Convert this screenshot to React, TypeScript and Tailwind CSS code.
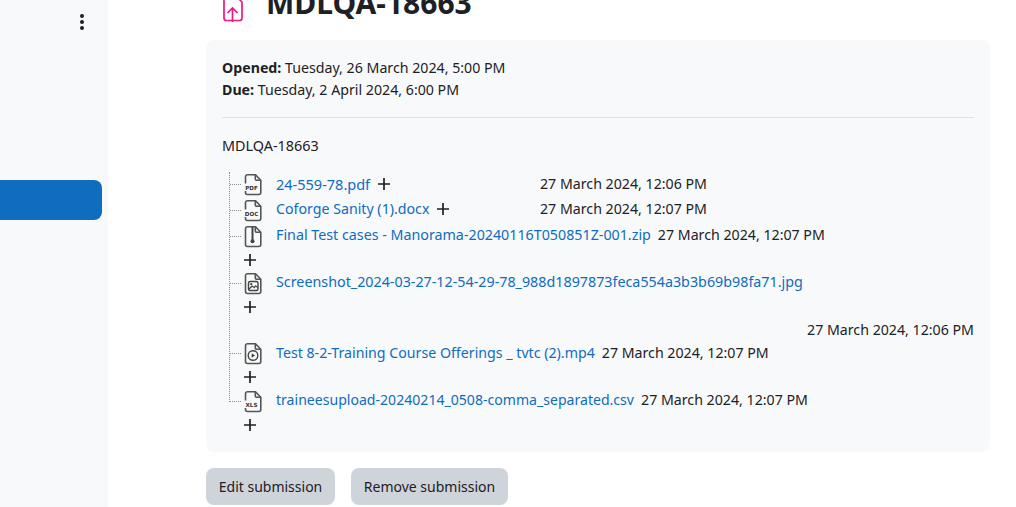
import type { ReactNode } from 'react';

const FONT = "font-['Noto_Sans','Open_Sans',sans-serif]";

// file outline shared by all the type icons
function FileIcon({ children }: { children?: ReactNode }) {
  return (
    <svg width="20" height="24" viewBox="0 0 20 24" fill="none" className="block shrink-0">
      <path
        d="M4.5 2.7h8l5.3 5.6v12.2a2 2 0 0 1-2 2H4.5a2 2 0 0 1-2-2V4.7a2 2 0 0 1 2-2Z"
        fill="#f8f9fa"
        stroke="#555"
        strokeWidth="1.6"
      />
      <path d="M12.3 2.7v4.1a1.5 1.5 0 0 0 1.5 1.5h4" stroke="#555" strokeWidth="1.6" />
      {children}
    </svg>
  );
}

function LabelIcon({ label }: { label: string }) {
  return (
    <FileIcon>
      <rect x="0" y="11.5" width="17" height="7.5" fill="#f8f9fa" />
      <text
        x="8.5"
        y="18"
        textAnchor="middle"
        fontFamily="'DejaVu Sans', sans-serif"
        fontWeight="700"
        fontSize="5.6"
        fill="#333"
      >
        {label}
      </text>
    </FileIcon>
  );
}

function ZipIcon() {
  return (
    <FileIcon>
      <path d="M9.5 3v13" stroke="#444" strokeWidth="2" />
      <circle cx="9.5" cy="17.2" r="2" fill="#444" />
    </FileIcon>
  );
}

function ImageIcon() {
  return (
    <FileIcon>
      <rect x="5.5" y="10.5" width="9.5" height="9" rx="1.5" stroke="#444" strokeWidth="1.4" />
      <circle cx="8.2" cy="13.2" r="1.1" fill="#444" />
      <path d="m6 18 3.2-3 2 1.6 1.5-1.8 2 1.8" stroke="#444" strokeWidth="1.2" />
    </FileIcon>
  );
}

function VideoIcon() {
  return (
    <FileIcon>
      <circle cx="10" cy="14.5" r="4.8" stroke="#444" strokeWidth="1.4" />
      <path d="M8.7 12.3v4.4l3.4-2.2Z" fill="#444" />
    </FileIcon>
  );
}

function Plus() {
  return (
    <svg width="14" height="14" viewBox="0 0 14 14" className="block shrink-0">
      <path d="M7 1v12M1 7h12" stroke="#1d2125" strokeWidth="1.7" />
    </svg>
  );
}

interface FileRowProps {
  icon: ReactNode;
  name: string;
  nameSize: string;
  date: string;
  inlinePlus?: boolean;
  dateOwnLine?: boolean;
  last?: boolean;
  low?: boolean;
  className?: string;
}

function FileRow({ icon, name, nameSize, date, inlinePlus, dateOwnLine, last, low, className }: FileRowProps) {
  const textBox = low ? 'h-[24px] leading-[24px]' : 'h-[22px] leading-[22px]';
  return (
    <li className={`relative pl-[13px] ${className ?? ''}`}>
      {/* rama del árbol */}
      <span className="absolute left-0 top-[12px] w-[11px] border-t border-dotted border-[#8a8d91]" />
      {last && <span className="absolute left-[-1px] top-[13px] bottom-0 w-[1px] bg-[#f8f9fa]" />}
      <div className="flex items-start h-[24px]">
        <div className="w-[33px] shrink-0">{icon}</div>
        <div className={`flex items-center ${textBox} ${inlinePlus ? 'w-[264px]' : ''}`}>
          <a className={`text-[#0f6cbf] whitespace-nowrap ${nameSize}`}>{name}</a>
          {inlinePlus && (
            <span className="ml-[7px]">
              <Plus />
            </span>
          )}
        </div>
        {!dateOwnLine && (
          <span className={`${textBox} whitespace-nowrap ${inlinePlus ? '' : 'ml-[7px]'}`}>{date}</span>
        )}
      </div>
      {!inlinePlus && (
        <div className="pt-[5px]">
          <Plus />
        </div>
      )}
      {dateOwnLine && <div className="text-right leading-[24px] mt-[4px]">{date}</div>}
    </li>
  );
}

export default function App() {
  return (
    <div className={`${FONT} flex h-[507px] w-[1016px] overflow-hidden bg-white text-[14.2px] text-[#1d2125]`}>
      {/* Sidebar */}
      <aside className="w-[108px] shrink-0 bg-[#f8f9fa] pt-[14px]">
        <div className="flex flex-col items-center gap-[2px] w-[4px] ml-[80px]">
          <span className="size-[4px] rounded-full bg-[#1d2125]" />
          <span className="size-[4px] rounded-full bg-[#1d2125]" />
          <span className="size-[4px] rounded-full bg-[#1d2125]" />
        </div>
        <div className="mt-[150px] h-[40px] w-[102px] rounded-r-lg bg-[#0f6cbf]" />
      </aside>

      {/* Contenido */}
      <main className="flex-1 pl-[98px] pr-[26px]">
        <div className="flex items-center h-[40px] -mt-[17px] pl-[16px]">
          <svg width="22" height="28" viewBox="0 0 22 28" fill="none" className="shrink-0 mt-[10px]">
            <path
              d="M3 1h10l7 7v16a2.5 2.5 0 0 1-2.5 2.5h-13A2.5 2.5 0 0 1 2 24V3Z"
              stroke="#f0168c"
              strokeWidth="1.7"
            />
            <path d="M10.5 28V14M5.5 19l5-5 5 5" stroke="#f0168c" strokeWidth="1.7" />
          </svg>
          <h1 className="ml-[22px] text-[30px] font-bold leading-[40px] whitespace-nowrap">MDLQA-18663</h1>
        </div>

        <div className="mt-[17px] h-[412px] rounded-lg bg-[#f8f9fa] px-[16px] pt-[17px]">
          <div className="leading-[22px]">
            <div>
              <b>Opened:</b> Tuesday, 26 March 2024, 5:00 PM
            </div>
            <div>
              <b>Due:</b> Tuesday, 2 April 2024, 6:00 PM
            </div>
          </div>
          <hr className="mt-[16px] border-[#dee2e6]" />
          <p className="mt-[17px] leading-[22px] text-[14.4px]">MDLQA-18663</p>

          <ul className="relative mt-[15px] border-l border-dotted border-[#8a8d91] ml-[7px]">
            <FileRow
              low
              nameSize="text-[14.5px]"
              icon={<LabelIcon label="PDF" />}
              name="24-559-78.pdf"
              date="27 March 2024, 12:06 PM"
              inlinePlus
            />
            <FileRow
              className="mt-[2px]"
              nameSize="text-[14.2px]"
              icon={<LabelIcon label="DOC" />}
              name="Coforge Sanity (1).docx"
              date="27 March 2024, 12:07 PM"
              inlinePlus
            />
            <FileRow
              className="mt-[2px]"
              nameSize="text-[14.28px]"
              icon={<ZipIcon />}
              name="Final Test cases - Manorama-20240116T050851Z-001.zip"
              date="27 March 2024, 12:07 PM"
            />
            <FileRow
              className="mt-[4px]"
              nameSize="text-[14.31px]"
              icon={<ImageIcon />}
              name="Screenshot_2024-03-27-12-54-29-78_988d1897873feca554a3b3b69b98fa71.jpg"
              date="27 March 2024, 12:06 PM"
              dateOwnLine
            />
            <FileRow
              low
              className="-mt-[1px]"
              nameSize="text-[14.2px]"
              icon={<VideoIcon />}
              name="Test 8-2-Training Course Offerings _ tvtc (2).mp4"
              date="27 March 2024, 12:07 PM"
            />
            <FileRow
              last
              className="mt-[5px]"
              nameSize="text-[14.08px]"
              icon={<LabelIcon label="XLS" />}
              name="traineesupload-20240214_0508-comma_separated.csv"
              date="27 March 2024, 12:07 PM"
            />
          </ul>
        </div>

        <div className="mt-[16px] flex gap-[16px] text-[14px]">
          <button className="h-[37px] w-[129px] rounded-lg bg-[#ced4da]">Edit submission</button>
          <button className="h-[37px] w-[157px] rounded-lg bg-[#ced4da]">Remove submission</button>
        </div>
      </main>
    </div>
  );
}
